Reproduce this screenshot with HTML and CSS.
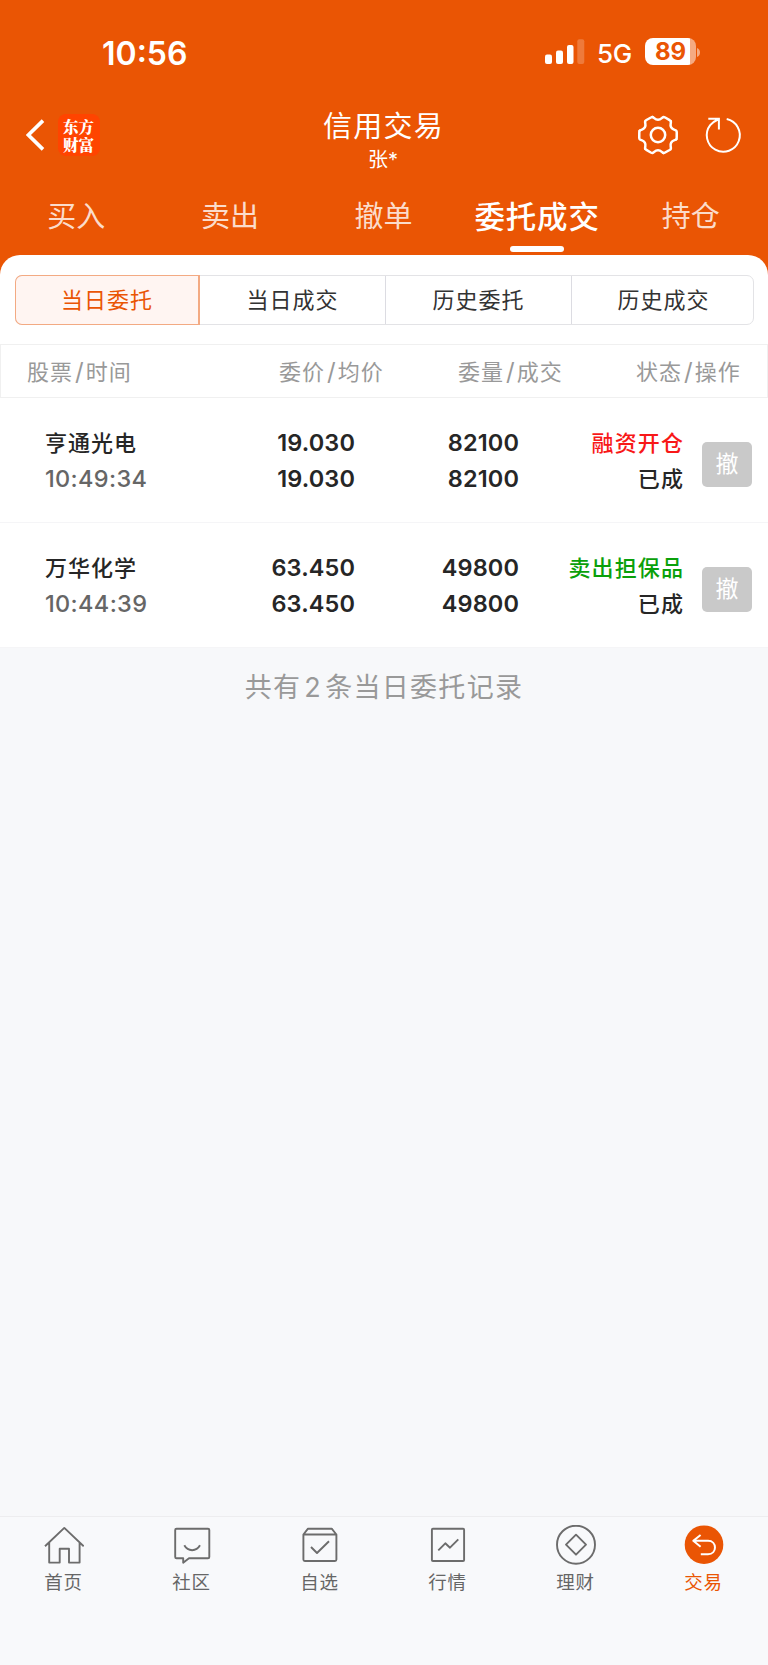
FILE: index.html
```html
<!DOCTYPE html>
<html lang="zh-CN">
<head>
<meta charset="utf-8">
<title>信用交易</title>
<link rel="stylesheet" href="styles.css">
</head>
<body>
<div class="app">
  <header class="header">
    <div class="status-bar">
      <span class="clock">10:56</span>
      <div class="status-right">
        <svg class="signal" width="40" height="26" viewBox="0 0 40 26" fill="#fff"><rect x="0" y="15.5" width="7" height="9.5" rx="2"/><rect x="11" y="11.5" width="7" height="13.5" rx="2"/><rect x="22" y="6" width="6.5" height="19" rx="2"/><rect x="32.3" y="0.3" width="7" height="24.7" rx="2" opacity=".22"/></svg>
        <span class="network">5G</span>
        <div class="battery"><span class="battery-level">89</span></div>
        <svg class="nub" width="4" height="9" viewBox="0 0 4 9"><path d="M0 0C4 1 4 8 0 9Z" fill="#fff" opacity=".5"/></svg>
      </div>
    </div>
    <div class="nav">
      <div class="nav-left">
        <svg class="back" width="20" height="32" viewBox="0 0 20 32" fill="none" stroke="#fff" stroke-width="3.6"><path d="M17 1.6 2.400 16 17 30.400"/></svg>
        <div class="logo"><span>东方</span><span>财富</span></div>
      </div>
      <div class="nav-title">
        <h1 class="title">信用交易</h1>
        <span class="account">张*</span>
      </div>
      <div class="nav-right">
        <svg width="42" height="42" viewBox="-21 -21 42 42" fill="none" stroke="#fff" stroke-width="2.5" stroke-linecap="round">
          <defs><path id="tooth" d="M-5.500-18C-3.800-17.600-3.200-15.200 0-15.200S3.800-17.600 5.500-18Q6.300-18 7.200-17.500L11.600-14.900Q12.900-14.200 12.840-13.760"/></defs>
          <use href="#tooth"/><use href="#tooth" transform="rotate(60)"/><use href="#tooth" transform="rotate(120)"/><use href="#tooth" transform="rotate(180)"/><use href="#tooth" transform="rotate(240)"/><use href="#tooth" transform="rotate(300)"/>
          <circle r="7.200"/>
        </svg>
        <svg width="42" height="42" viewBox="-21 -21 42 42" fill="none" stroke="#fff" stroke-width="2"><path d="M3.700-15.900A16.500 16.500 0 1 1-12.800-9.800Q-9.500-13.500-4.200-16M-14.700-16.200H-4.100V-5.400"/></svg>
      </div>
    </div>
    <nav class="tabs">
      <span class="tab">买入</span>
      <span class="tab">卖出</span>
      <span class="tab">撤单</span>
      <span class="tab tab-active">委托成交</span>
      <span class="tab">持仓</span>
    </nav>
  </header>

  <main class="panel">
    <div class="segments">
      <span class="segment segment-active">当日委托</span>
      <span class="segment">当日成交</span>
      <span class="segment">历史委托</span>
      <span class="segment">历史成交</span>
    </div>
    <div class="table-head">
      <span class="th">股票<i>/</i>时间</span>
      <span class="th">委价<i>/</i>均价</span>
      <span class="th">委量<i>/</i>成交</span>
      <span class="th">状态<i>/</i>操作</span>
    </div>
    <div class="order">
      <div class="cell stock"><span class="name">亨通光电</span><span class="time">10:49:34</span></div>
      <div class="cell"><span>19.030</span><span>19.030</span></div>
      <div class="cell"><span>82100</span><span>82100</span></div>
      <div class="cell state"><span class="buy">融资开仓</span><span>已成</span></div>
      <span class="cancel">撤</span>
    </div>
    <div class="order">
      <div class="cell stock"><span class="name">万华化学</span><span class="time">10:44:39</span></div>
      <div class="cell"><span>63.450</span><span>63.450</span></div>
      <div class="cell"><span>49800</span><span>49800</span></div>
      <div class="cell state"><span class="sell">卖出担保品</span><span>已成</span></div>
      <span class="cancel">撤</span>
    </div>
  </main>
  <p class="summary">共有<b>2</b>条当日委托记录</p>

  <nav class="tabbar">
    <div class="item">
      <svg class="icon" viewBox="0 0 40 40"><path d="M1 21.300 20.300 2.900 39.700 21.300M5.200 17.500V37.600H15.700V23.700H25V37.600H35.600V17.500"/></svg>
      <span>首页</span>
    </div>
    <div class="item">
      <svg class="icon" viewBox="0 0 40 40"><path d="M4.500 3.700H36Q37.300 3.700 37.300 5V32Q37.300 33.300 36 33.300H17L11.200 37.700V33.300H4.500Q3.200 33.300 3.200 32V5Q3.200 3.700 4.500 3.700ZM12.300 20.300C16 26.800 24.300 26.800 28 20.300"/></svg>
      <span>社区</span>
    </div>
    <div class="item">
      <svg class="icon" viewBox="0 0 40 40"><path d="M3.400 9.500H36.400V34.500Q36.400 36 35 36H4.800Q3.400 36 3.400 34.500V9.500L8 3.700H31.700L36.400 9.500M11 22 17 28 29 16.300"/></svg>
      <span>自选</span>
    </div>
    <div class="item">
      <svg class="icon" viewBox="0 0 40 40"><rect x="3.900" y="3.700" width="32.200" height="32.300" rx="1"/><path d="M10.300 25.300 17.300 18.300 22 22.700 30.300 14.300"/></svg>
      <span>行情</span>
    </div>
    <div class="item">
      <svg class="icon" viewBox="0 0 40 40"><circle cx="20" cy="19.700" r="19"/><path d="M20 9.700 30 19.700 20 29.700 10 19.700Z"/></svg>
      <span>理财</span>
    </div>
    <div class="item item-active">
      <svg class="icon" viewBox="0 0 40 40"><circle class="disc" cx="20" cy="19.700" r="19.300"/><path class="arrow" d="M16.600 10 9.300 15.800 16.600 21.700M9.300 15.800H24C33.300 15.800 33.300 29.300 24 29.300H16.800"/></svg>
      <span>交易</span>
    </div>
  </nav>
</div>
</body>
</html>
```
FILE: styles.css
```css
* { box-sizing: border-box; }

body {
  margin: 0;
  font-family: Inter, "Noto Sans CJK SC", sans-serif;
  background: #f7f8fa;
}

.app {
  width: 768px;
  height: 1665px;
  display: flex;
  flex-direction: column;
}

.header {
  height: 275px;
  flex: none;
  background: #ea5504;
  color: #fff;
}

.status-bar {
  height: 104px;
  padding: 0 67px 0 102px;
  display: flex;
  justify-content: space-between;
  align-items: center;
}

.clock {
  padding-top: 3px;
  font-size: 32px;
  font-weight: 600;
  line-height: 40px;
}

.status-right { display: flex; align-items: center; }

.network {
  width: 48px;
  padding: 3px 0 0 12px;
  font-size: 26px;
  font-weight: 500;
  letter-spacing: -0.3px;
  line-height: 30px;
}

.battery {
  width: 51px;
  height: 27px;
  margin: 0 0 1px 12px;
  border-radius: 8px;
  background: linear-gradient(90deg, #fff 45px, #f5aa82 45px);
  text-align: center;
}

.battery-level {
  display: block;
  color: #ea5504;
  font-size: 24px;
  font-weight: 700;
  line-height: 28px;
}

.nub { margin-left: 1px; }

.nav {
  height: 85px;
  display: grid;
  grid-template-columns: 1fr 1fr 1fr;
  padding: 0 24px;
}

.nav-left { display: flex; gap: 12px; padding: 10px 0 0 2px; }
.back { margin-top: 5px; }

.logo {
  width: 42px;
  height: 42px;
  padding: 3px 1px 0 0;
  border-radius: 8px;
  background: #ff4400;
  font-family: "Noto Serif CJK SC", "Noto Sans CJK SC", sans-serif;
  font-size: 15.5px;
  font-weight: 900;
  line-height: 18px;
  text-align: center;
  display: flex;
  flex-direction: column;
}

.nav-title { display: flex; flex-direction: column; align-items: center; }

.title {
  margin: 4px 0 0 -1px;
  font-size: 29px;
  font-weight: 400;
  letter-spacing: 1.3px;
  line-height: 38px;
}

.account { margin-left: -2px; font-size: 20px; line-height: 28px; }
.nav-right { display: flex; justify-content: flex-end; gap: 23px; padding-top: 10px; }

.tabs {
  height: 66px;
  display: grid;
  grid-template-columns: repeat(5, 1fr);
}

.tab {
  display: flex;
  flex-direction: column;
  align-items: center;
  padding: 7px 1px 0 0;
  font-size: 29px;
  line-height: 42px;
  color: #fbdccb;
}

.tab-active {
  padding-right: 1px;
  color: #fff;
  font-size: 30.5px;
  font-weight: 500;
  letter-spacing: 0.8px;
}

.tab-active::after {
  content: "";
  width: 54px;
  height: 6px;
  margin-top: 8px;
  border-radius: 3px;
  background: #fff;
}

.panel {
  margin-top: -20px;
  padding-top: 20px;
  flex: none;
  background: #fff;
  border-radius: 20px 20px 0 0;
}

.segments {
  height: 50px;
  margin: 0 14px 0 15px;
  display: grid;
  grid-template-columns: 184px 186px 186px 1fr;
  border: 1px solid #e3e3e6;
  border-radius: 7px;
}

.segment {
  font-size: 22px;
  letter-spacing: 1px;
  line-height: 48px;
  text-align: center;
  color: #333;
}

.segment + .segment { border-right: 1px solid #dcdce2; }
.segment:last-child { border-right: 0; padding-left: 2px; }

.segment-active {
  margin: -1px 0 -1px -1px;
  line-height: 48px;
  color: #ea5504;
  background: #fff5f2;
  border: 1px solid #f3aa83;
  border-right-width: 2px;
  border-radius: 7px 0 0 7px;
}

.table-head {
  height: 54px;
  margin-top: 19px;
  padding: 0 28px 0 26px;
  display: flex;
  border: 1px solid #f0f0f0;
}

.th {
  flex: none;
  width: 104px;
  font-size: 22px;
  letter-spacing: 1px;
  line-height: 53px;
  color: #999;
  white-space: nowrap;
}

.th:nth-child(2) { margin-left: 148px; }
.th:nth-child(3) { margin-left: 75px; }
.th:nth-child(4) { margin-left: 74px; }
.th i { font-style: normal; font-size: 24px; letter-spacing: 2px; padding-left: 2px; }

.order {
  height: 125px;
  padding: 27px 16px 0 45px;
  display: grid;
  grid-template-columns: 130px 180px 164px 165px 50px;
  border-bottom: 1px solid #f5f5f7;
}

.cell {
  display: flex;
  flex-direction: column;
  align-items: flex-end;
  font-size: 23.5px;
  font-weight: 600;
  letter-spacing: 0.1px;
  line-height: 36px;
  color: #262626;
}

.stock { align-items: flex-start; }
.name, .state { font-size: 22px; font-weight: 500; letter-spacing: 1px; }
.time { color: #666; font-weight: 500; letter-spacing: 0.35px; }
.buy { color: #f81818; }
.sell { color: #0aa00a; }
.state { letter-spacing: 1.1px; }

.cancel {
  width: 50px;
  height: 45px;
  margin: 17px 0 0 18px;
  border-radius: 5px;
  background: #c9c9c9;
  color: #fff;
  font-size: 23px;
  line-height: 45px;
  text-align: center;
}

.summary {
  margin: 20px 0 0;
  font-size: 27px;
  letter-spacing: 1.3px;
  line-height: 40px;
  text-align: center;
  color: #999;
}

.summary b { font-weight: 400; padding: 0 3px; }

.tabbar {
  height: 149px;
  margin-top: auto;
  padding-top: 8px;
  display: grid;
  grid-template-columns: repeat(6, 1fr);
  border-top: 1px solid #ededef;
  background: #f8f9fb;
}

.item {
  display: flex;
  flex-direction: column;
  align-items: center;
  font-size: 18.5px;
  letter-spacing: 0.8px;
  line-height: 34px;
  color: #666;
}

.item span { margin-left: -1px; }
.item-active { color: #ea5504; }
.icon { width: 40px; height: 40px; fill: none; stroke: #6c6c6c; stroke-width: 1.9; stroke-linejoin: round; }
.icon .disc { fill: #ea5504; stroke: none; }
.icon .arrow { stroke: #fff; stroke-width: 2; }
```
